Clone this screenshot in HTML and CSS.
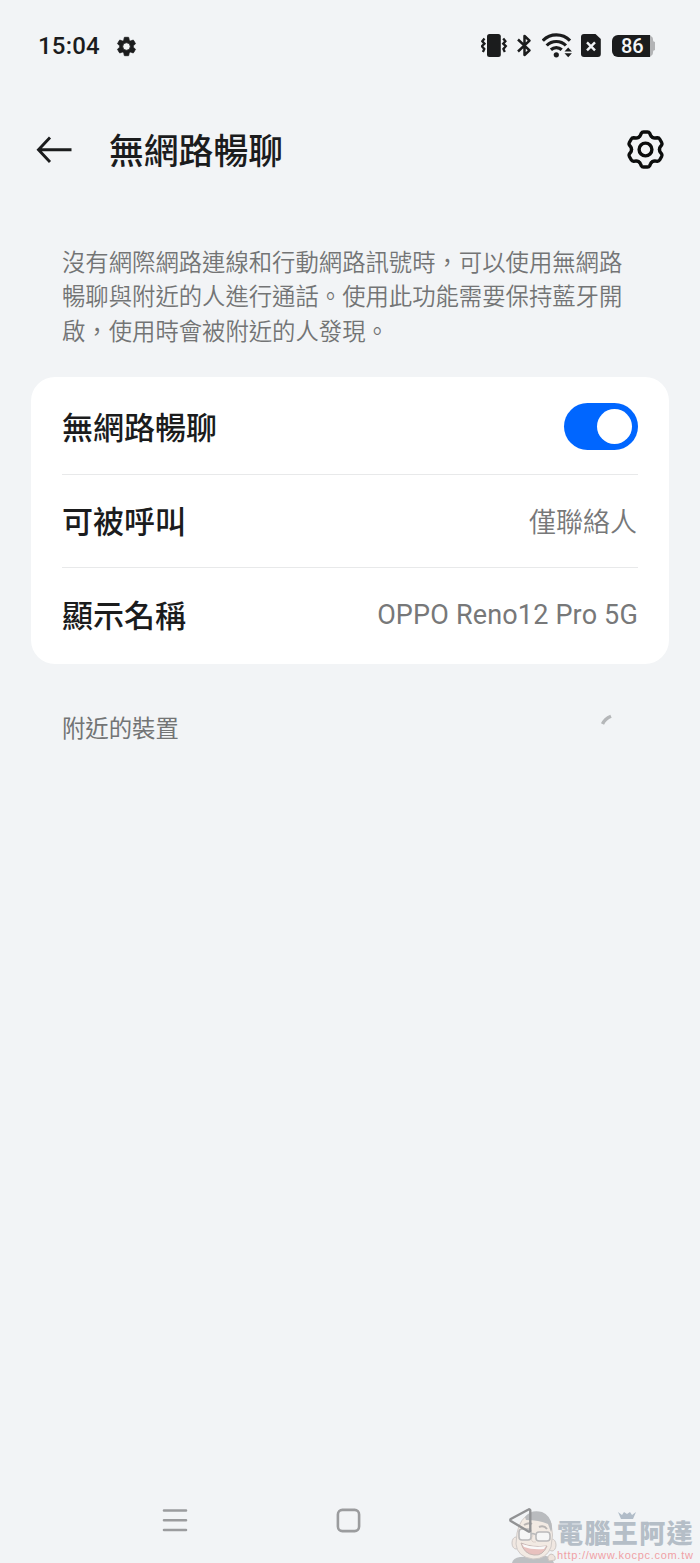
FILE: index.html
```html
<!DOCTYPE html>
<html lang="zh-Hant">
<head>
<meta charset="utf-8">
<title>無網路暢聊</title>
<link rel="stylesheet" href="styles.css">
</head>
<body>
<div class="screen">
  <div class="status">
    <span class="time">15:04</span>
    <svg class="status-gear" width="23" height="23" viewBox="0 0 24 24"><path fill="#1b1c1d" stroke="#1b1c1d" stroke-width=".8" d="M19.14 12.94c.04-.3.06-.61.06-.94 0-.32-.02-.64-.07-.94l2.03-1.58a.49.49 0 0 0 .12-.61l-1.92-3.32a.488.488 0 0 0-.59-.22l-2.39.96c-.5-.38-1.03-.7-1.62-.94l-.36-2.54a.484.484 0 0 0-.48-.41h-3.84c-.24 0-.43.17-.47.41l-.36 2.54c-.59.24-1.13.57-1.62.94l-2.39-.96c-.22-.08-.47 0-.59.22L2.74 8.87c-.12.21-.08.47.12.61l2.03 1.58c-.05.3-.09.63-.09.94s.02.64.07.94l-2.03 1.58a.49.49 0 0 0-.12.61l1.92 3.32c.12.22.37.29.59.22l2.39-.96c.5.38 1.03.7 1.62.94l.36 2.54c.05.24.24.41.48.41h3.84c.24 0 .44-.17.47-.41l.36-2.54c.59-.24 1.13-.56 1.62-.94l2.39.96c.22.08.47 0 .59-.22l1.92-3.32c.12-.22.07-.47-.12-.61l-2.01-1.58zM12 15.9a3.9 3.9 0 1 1 0-7.8 3.9 3.9 0 0 1 0 7.8z"/></svg>
    <div class="indicators">
      <svg width="27" height="26" viewBox="0 0 27 26">
        <rect x="6" y="1" width="13.8" height="23" rx="2.5" fill="#1b1c1d"/>
        <path d="M3.500 5.500 1.300 8.200l2.200 2.500-2.600 2.500L3.300 16l-1.400 3M22.200 5.500l2.200 2.700-2.200 2.500 2.600 2.500-2.400 2.800 1.400 3" fill="none" stroke="#1b1c1d" stroke-width="2.3"/>
      </svg>
      <svg width="16" height="26" viewBox="0 0 16 26"><path d="M1 6.500 12.500 17.300l-5 4.700V3l5 4.700L1 18.500" fill="none" stroke="#1b1c1d" stroke-width="2.5" stroke-linejoin="round"/></svg>
      <svg class="wifi" width="31" height="26" viewBox="0 0 31 26">
        <g transform="translate(-.5 -.5)"><g fill="none" stroke="#1b1c1d" stroke-width="3.2"><path d="M1.300 8.200a19 19 0 0 1 27.200 0"/><path d="M5.200 13a13.500 13.500 0 0 1 19.200 0"/><path d="M9.400 17.200a8 8 0 0 1 10.800 0"/></g>
        <circle cx="14.8" cy="22.3" r="2.6" fill="#1b1c1d"/>
        <path d="m26.700 15 3.700 4h-7.400zm0 9.800 3.700-4h-7.400z" fill="#1b1c1d"/></g>
      </svg>
      <svg class="sim" width="20" height="26" viewBox="0 0 20 26">
        <path d="M3 1h11.500l5.300 5v15a3 3 0 0 1-3 3H3a3 3 0 0 1-3-3V4a3 3 0 0 1 3-3z" fill="#1b1c1d"/>
        <path d="m6 9.300 8 8m0-8-8 8" stroke="#f2f4f6" stroke-width="2.4"/>
      </svg>
      <div class="battery"><span class="charge">86</span><span class="nub"></span></div>
    </div>
  </div>

  <header class="header">
    <svg width="36" height="30" viewBox="0 0 36 30"><path d="M14 2.500 2.500 14.700 14 26.900M2.500 14.700h33" fill="none" stroke="#1b1c1d" stroke-width="2.9"/></svg>
    <h1 class="title">無網路暢聊</h1>
    <svg class="settings" width="40" height="40" viewBox="-19.500 -19.500 40 40" fill="none" stroke="#0c0d0d" stroke-width="3.4" stroke-linecap="round">
      <defs><path id="tooth" d="M-7-12.100Q-5.500-13-5-14.300L-4.200-16.200Q-3.500-17.500-2-17.500H2Q3.500-17.500 4.200-16.200L5-14.300Q5.500-13 7-12.100"/></defs>
      <use href="#tooth"/><use href="#tooth" transform="rotate(60)"/><use href="#tooth" transform="rotate(120)"/><use href="#tooth" transform="rotate(180)"/><use href="#tooth" transform="rotate(240)"/><use href="#tooth" transform="rotate(300)"/>
      <circle r="6.4"/>
    </svg>
  </header>

  <p class="intro">沒有網際網路連線和行動網路訊號時，可以使用無網路<br>暢聊與附近的人進行通話。使用此功能需要保持藍牙開<br>啟，使用時會被附近的人發現。</p>

  <section class="card">
    <div class="row"><span class="label">無網路暢聊</span><span class="toggle"><span class="knob"></span></span></div>
    <div class="row"><span class="label">可被呼叫</span><span class="value">僅聯絡人</span></div>
    <div class="row"><span class="label">顯示名稱</span><span class="value latin">OPPO Reno12 Pro 5G</span></div>
  </section>

  <div class="nearby">
    <span>附近的裝置</span>
    <svg class="spinner" width="14" height="14" viewBox="0 0 14 14"><path d="M2.500 11C4 7.600 6.700 5 11 3.200" fill="none" stroke="#b5b7b9" stroke-width="3.4"/></svg>
  </div>

  <div class="watermark">
    <svg class="mascot" width="46" height="54" viewBox="0 0 46 54">
      <path d="M1 54q1-5 8-6l26-1q6 1 8 7z" fill="#b8babd"/>
      <ellipse cx="5" cy="34" rx="4" ry="6" fill="#f0e6df" stroke="#c9c3c0"/>
      <ellipse cx="41" cy="36" rx="4" ry="6" fill="#f0e6df" stroke="#c9c3c0"/>
      <path d="M6 24Q9 9 19 5q14-2 21 9 3 12 0 24-4 12-18 12Q6 48 5 35z" fill="#f2e9e2" stroke="#ccc6c3"/>
      <path d="M14 8Q20 0 31 3q10 4 10 17l-1 3-3-8q-9-4-22-4z" fill="#b3b5b8"/>
      <path d="M13 16q5-3 8-1m7 3q5-2 8 2" fill="none" stroke="#b2aeac" stroke-width="2"/>
      <path d="M22 26q-3 5 0 7h3" fill="none" stroke="#dccfc7"/>
      <g fill="#f7f7f7" stroke="#b5b4b5" stroke-width="1.6"><rect x="8" y="20" width="12" height="11" rx="3"/><rect x="25" y="23" width="14" height="9" rx="3"/><path d="M20 25q3-1 5 1" fill="none"/></g>
      <path d="M10 34q11 5 26 3-4 10-13 9-10-1-13-12z" fill="#e8bcb8" stroke="#c1b1ad"/>
      <path d="M11 35q11 4 24 2l-2 3q-12 1-20-2z" fill="#fafafa"/>
      <path d="M38 52q-3-5 2-7 5 1 4 6z" fill="#eee3db" stroke="#c9c0bb"/>
    </svg>
    <div class="brand">
      <svg class="crown" width="18" height="9" viewBox="0 0 18 9"><path d="m0 1 4 3 2-3 3 2 3-2 2 3 4-3-3 7H3z" fill="#aab7c4"/></svg>
      <span class="brand-name">電腦王阿達</span>
      <span class="brand-url">http://www.kocpc.com.tw</span>
    </div>
  </div>

  <nav class="navbar">
    <svg width="26" height="26" viewBox="0 0 26 26"><path d="M2 3.500h22M2 13.200h22M2 23h22" stroke="#9b9c9e" stroke-width="2.6" stroke-linecap="round"/></svg>
    <svg width="26" height="26" viewBox="0 0 26 26"><rect x="2.900" y="2.900" width="21.200" height="21.200" rx="4.500" fill="none" stroke="#9b9c9e" stroke-width="2.6"/></svg>
    <svg width="26" height="26" viewBox="0 0 26 26"><path d="M22.300 3.500v20a1.200 1.200 0 0 1-1.800 1L2.800 14a1.200 1.200 0 0 1 0-2L20.500 2.500a1.200 1.200 0 0 1 1.800 1z" fill="none" stroke="#919294" stroke-width="2.4"/></svg>
  </nav>
</div>
</body>
</html>
```

FILE: styles.css
```css
* { box-sizing: border-box; }
body {
  margin: 0;
  background: #f2f4f6;
  color: #1b1c1d;
  font-family: "Noto Sans CJK TC", sans-serif;
}
svg { display: block; flex: none; }
.screen {
  position: relative;
  width: 700px;
  height: 1563px;
  overflow: hidden;
  display: flex;
  flex-direction: column;
}
.status {
  height: 92px;
  padding: 0 45px 0 38px;
  display: flex;
  align-items: center;
  flex: none;
}
.time {
  font: 500 24px/28px Roboto, sans-serif;
  letter-spacing: 0.2px;
  width: 77px;
}
.indicators {
  margin-left: auto;
  display: flex;
  align-items: center;
}
.indicators svg { margin-top: -1px; margin-right: 9px; }
.indicators .wifi { margin-right: 8px; }
.indicators .sim { margin-right: 11px; }
.battery {
  width: 43px;
  display: flex;
  align-items: center;
}
.charge {
  width: 38px;
  height: 22px;
  border-radius: 6px 0 0 6px;
  background: #1b1c1d;
  color: #f5f6f7;
  font: 500 20px/23px Roboto, sans-serif;
  padding-left: 9px;
}
.nub {
  width: 5px;
  height: 22px;
  background: #b3b4b6;
  clip-path: polygon(0 0, 55% 12%, 65% 28%, 100% 32%, 100% 68%, 65% 72%, 55% 88%, 0 100%);
}
.header {
  height: 116px;
  padding: 0 34px 0 36px;
  display: flex;
  align-items: center;
  flex: none;
}
.title {
  margin: -2px 0 0 37px;
  font-size: 34.8px;
  line-height: 50px;
  font-weight: 500;
}
.settings { margin-left: auto; }
.intro {
  margin: 36px 0 0 62px;
  font-size: 23.35px;
  line-height: 34.3px;
  font-weight: 350;
  color: #737475;
  white-space: nowrap;
}
.card {
  margin: 30px 31px 0 31px;
  padding: 4px 31px 3px;
  height: 287px;
  border-radius: 24px;
  background: #fff;
  display: flex;
  flex-direction: column;
  flex: none;
}
.row {
  flex: 1;
  display: flex;
  align-items: center;
  justify-content: space-between;
}
.row + .row { border-top: 1px solid #e8e9ea; }
.label {
  font-size: 31px;
  line-height: 44px;
  font-weight: 500;
  margin-top: -2px;
}
.value {
  font-size: 27px;
  line-height: 40px;
  font-weight: 350;
  color: #777879;
  margin-right: 1px;
}
.latin {
  font-family: Roboto, sans-serif;
  font-weight: 400;
  letter-spacing: 0.17px;
  margin-right: 0;
}
.toggle {
  width: 74px;
  height: 47px;
  border-radius: 24px;
  background: #0066ff;
  padding: 6px;
  display: flex;
  justify-content: flex-end;
  margin-top: -1px;
}
.knob {
  width: 35px;
  height: 35px;
  border-radius: 50%;
  background: #fff;
}
.nearby {
  margin-top: 43px;
  padding: 0 86px 0 62px;
  height: 40px;
  font-size: 23.35px;
  line-height: 40px;
  color: #737475;
  display: flex;
  justify-content: space-between;
}
.spinner { margin-top: 6px; }
.navbar {
  position: relative;
  margin-top: auto;
  height: 86px;
  padding: 0 166px 0 162px;
  display: flex;
  align-items: center;
  justify-content: space-between;
}
.watermark {
  position: absolute;
  right: 5px;
  bottom: 0;
  display: flex;
  align-items: flex-end;
  opacity: 0.9;
}
.brand {
  width: 138px;
  padding-bottom: 1px;
  display: flex;
  flex-direction: column;
}
.crown { margin-left: 61px; margin-bottom: -4px; }
.brand-name {
  font-size: 26px;
  letter-spacing: 1.4px;
  line-height: 32px;
  font-weight: 900;
  color: #afb9c3;
  white-space: nowrap;
}
.brand-url {
  font: 11px/14px "Liberation Sans", sans-serif;
  letter-spacing: 0.7px;
  color: #f0989d;
  white-space: nowrap;
}
```
